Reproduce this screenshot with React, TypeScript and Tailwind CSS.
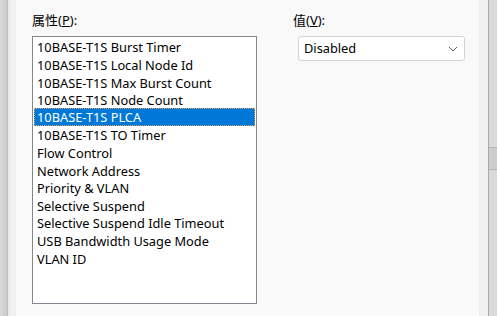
import React from "react";

const items = [
  "10BASE-T1S Burst Timer",
  "10BASE-T1S Local Node Id",
  "10BASE-T1S Max Burst Count",
  "10BASE-T1S Node Count",
  "10BASE-T1S PLCA",
  "10BASE-T1S TO Timer",
  "Flow Control",
  "Network Address",
  "Priority & VLAN",
  "Selective Suspend",
  "Selective Suspend Idle Timeout",
  "USB Bandwidth Usage Mode",
  "VLAN ID",
];

const selected = 4;

export default function App() {
  return (
    <div className="flex h-[316px] w-[497px] overflow-hidden bg-[#f9f9f9] font-['Noto_Sans','Noto_Sans_CJK_SC',sans-serif] text-[12.8px] text-black">
      {/* left edge of the window behind */}
      <div className="flex h-full shrink-0">
        <div className="w-[7px] bg-gradient-to-r from-[#d9d9d9] to-[#cacaca]" />
        <div className="w-px bg-[#bfbfbf]" />
        <div className="w-[2px] bg-[#ebebeb]" />
        <div className="w-[6px] bg-[#f1f1f1]" />
      </div>

      <div className="flex flex-1 pl-[16px]">
        <div className="flex flex-col">
          <div className="mt-[12px] h-[16px] leading-[16px] text-[13px]">
            属性(<span className="underline">P</span>):
          </div>
          <div className="mt-[8px] h-[268px] w-[225px] border border-[#828790] bg-white px-px pb-px pt-[2px]">
            {items.map((it, i) => (
              <div
                key={it}
                className={
                  i === selected
                    ? "-mt-px mb-px flex h-[17.6px] items-center border border-dotted border-[#d9a066] bg-[#0078d7] pl-[2px] pt-px leading-none text-white"
                    : "flex h-[17.6px] items-center pl-[3px] leading-none"
                }
              >
                {it}
              </div>
            ))}
          </div>
        </div>

        <div className="ml-[36px] flex flex-col">
          <div className="mt-[12px] h-[16px] leading-[16px] text-[13px]">
            值(<span className="underline">V</span>):
          </div>
          <div className="ml-[5px] mt-[8px] flex h-[25px] w-[167px] items-center justify-between rounded-[3px] border border-[#d3d3d3] bg-white pl-[5px] pr-[6px]">
            <span>Disabled</span>
            <svg width="10" height="6" viewBox="0 0 10 6" fill="none">
              <path d="M1 1l4 4 4-4" stroke="#606060" strokeWidth="1" />
            </svg>
          </div>
        </div>
      </div>

      {/* right edge */}
      <div className="flex h-full shrink-0">
        <div className="w-px bg-[#ececec]" />
        <div className="w-[8px] bg-[#f0f0f0]" />
        <div className="w-px bg-[#a9a9a9]" />
        <div className="flex w-[8px] flex-col bg-[#dadada]">
          <div className="h-[147px]" />
          <div className="h-[23px] border-y border-[#b3b3b3] bg-[#cdcdcd]" />
        </div>
      </div>
    </div>
  );
}
